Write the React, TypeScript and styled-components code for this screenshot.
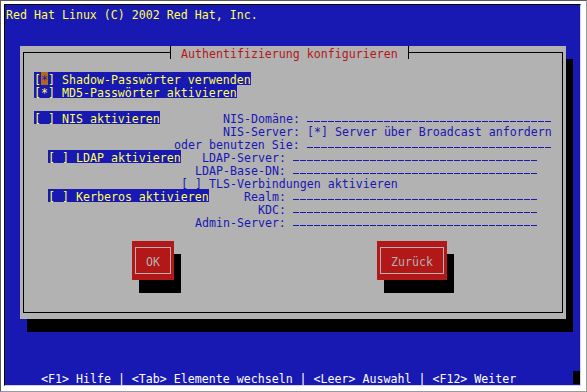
import React from 'react'
import styled, { createGlobalStyle } from 'styled-components'

const BLUE = '#1818b2'
const GRAY = '#b2b2b2'
const RED = '#b21818'
const YELLOW = '#ffff54'
const BROWN = '#b26818'

const GlobalStyle = createGlobalStyle`
  html, body {
    margin: 0;
    padding: 0;
    background: #fff;
  }
  body {
    font-family: "DejaVu Sans Mono", "Liberation Mono", monospace;
    font-size: 11.627px;
  }
`

const Window = styled.div`
  box-sizing: border-box;
  width: 587px;
  height: 392px;
  padding: 3px 5px 5px 3px;
  background: #fff;
  border: 1px solid;
  border-color: #5a5a5a #9a9a9a #9a9a9a #5a5a5a;
`

// the console: 82 x 29 character cells of 7 x 13 px
const Screen = styled.div`
  display: grid;
  grid-template-columns: repeat(82, 7px);
  grid-template-rows: repeat(29, 13px);
  padding: 2px 0 1px 1px;
  background: ${BLUE};
  border: 1px solid;
  border-color: #000 #d4d4d4 #d4d4d4 #000;
`

type Place = { $row: number; $col: number }

const Cell = styled.span<Place>`
  grid-row: ${(p) => p.$row};
  grid-column: ${(p) => p.$col};
  justify-self: start;
  height: 13px;
  line-height: 16px;
  white-space: pre;
`

const Banner = styled(Cell)`
  color: ${YELLOW};
`

const HelpLine = styled(Cell)`
  color: #fff;
`

const Cursor = styled.span`
  grid-row: 29;
  grid-column: 82;
  background: #000;
`

const Dialog = styled.section`
  grid-row: 4 / span 21;
  grid-column: 3 / span 78;
  padding: 6px 3px;
  background: ${GRAY};
  box-shadow: 7px 13px 0 #000;
`

const Frame = styled.div`
  position: relative;
  display: grid;
  grid-template-columns: repeat(76, 7px);
  grid-template-rows: repeat(19, 13px);
  padding: 6px 3px;
  border: 1px solid #000;
`

const Title = styled.h1`
  position: absolute;
  top: -7px;
  left: 146px;
  margin: 0;
  padding: 0 10px;
  height: 13px;
  font: inherit;
  line-height: 16px;
  color: ${RED};
  background: ${GRAY};
  border-left: 1px solid #000;
  border-right: 1px solid #000;
  white-space: pre;
`

const Check = styled(Cell)<{ $active?: boolean }>`
  color: ${(p) => (p.$active ? YELLOW : BLUE)};
  background: ${(p) => (p.$active ? BLUE : 'transparent')};
`

const Focus = styled.span`
  display: inline-block;
  vertical-align: top;
  height: 13px;
  line-height: 16px;
  color: ${BLUE};
  background: ${BROWN};
`

const Label = styled(Cell)`
  color: ${BLUE};
`

const Entry = styled.span<Place & { $len: number }>`
  grid-row: ${(p) => p.$row};
  grid-column: ${(p) => p.$col} / span ${(p) => p.$len};
  height: 13px;
  background-image: repeating-linear-gradient(90deg, ${BLUE} 0 6px, transparent 6px 7px);
  background-size: 100% 1px;
  background-position: 0 10px;
  background-repeat: no-repeat;
`

const Button = styled.button<{ $col: number; $span: number }>`
  grid-row: 15 / span 3;
  grid-column: ${(p) => p.$col} / span ${(p) => p.$span};
  display: flex;
  margin: 0;
  padding: 6px 3px;
  border: 0;
  background: ${RED};
  box-shadow: 7px 13px 0 #000;
  font: inherit;
  color: ${GRAY};
  cursor: pointer;
`

const ButtonFace = styled.span`
  flex: 1;
  display: flex;
  align-items: center;
  justify-content: center;
  border: 1px solid ${GRAY};
`

const ButtonText = styled.span`
  height: 13px;
  line-height: 16px;
  white-space: pre;
`

const App: React.FC = () => {
  return (
    <>
      <GlobalStyle />
      <Window>
        <Screen>
          <Banner $row={1} $col={1}>
            Red Hat Linux (C) 2002 Red Hat, Inc.
          </Banner>

          <Dialog>
            <Frame>
              <Title>Authentifizierung konfigurieren</Title>

              <Check $row={2} $col={2} $active>
                [<Focus>*</Focus>] Shadow-Passwörter verwenden
              </Check>
              <Check $row={3} $col={2} $active>
                [*] MD5-Passwörter aktivieren
              </Check>

              <Check $row={5} $col={2} $active>
                [ ] NIS aktivieren
              </Check>
              <Label $row={5} $col={29}>NIS-Domäne:</Label>
              <Entry $row={5} $col={41} $len={35} />
              <Label $row={6} $col={29}>NIS-Server:</Label>
              <Check $row={6} $col={41}>
                [*] Server über Broadcast anfordern
              </Check>
              <Label $row={7} $col={22}>oder benutzen Sie:</Label>
              <Entry $row={7} $col={41} $len={35} />

              <Check $row={8} $col={4} $active>
                [ ] LDAP aktivieren
              </Check>
              <Label $row={8} $col={26}>LDAP-Server:</Label>
              <Entry $row={8} $col={39} $len={35} />
              <Label $row={9} $col={25}>LDAP-Base-DN:</Label>
              <Entry $row={9} $col={39} $len={35} />
              <Check $row={10} $col={23}>
                [ ] TLS-Verbindungen aktivieren
              </Check>

              <Check $row={11} $col={4} $active>
                [ ] Kerberos aktivieren
              </Check>
              <Label $row={11} $col={32}>Realm:</Label>
              <Entry $row={11} $col={39} $len={35} />
              <Label $row={12} $col={34}>KDC:</Label>
              <Entry $row={12} $col={39} $len={35} />
              <Label $row={13} $col={25}>Admin-Server:</Label>
              <Entry $row={13} $col={39} $len={35} />

              <Button $col={16} $span={6}>
                <ButtonFace>
                  <ButtonText>OK</ButtonText>
                </ButtonFace>
              </Button>
              <Button $col={51} $span={10}>
                <ButtonFace>
                  <ButtonText>Zurück</ButtonText>
                </ButtonFace>
              </Button>
            </Frame>
          </Dialog>

          <HelpLine $row={29} $col={6}>
            {'<F1> Hilfe | <Tab> Elemente wechseln | <Leer> Auswahl | <F12> Weiter'}
          </HelpLine>
          <Cursor />
        </Screen>
      </Window>
    </>
  )
}

export default App
